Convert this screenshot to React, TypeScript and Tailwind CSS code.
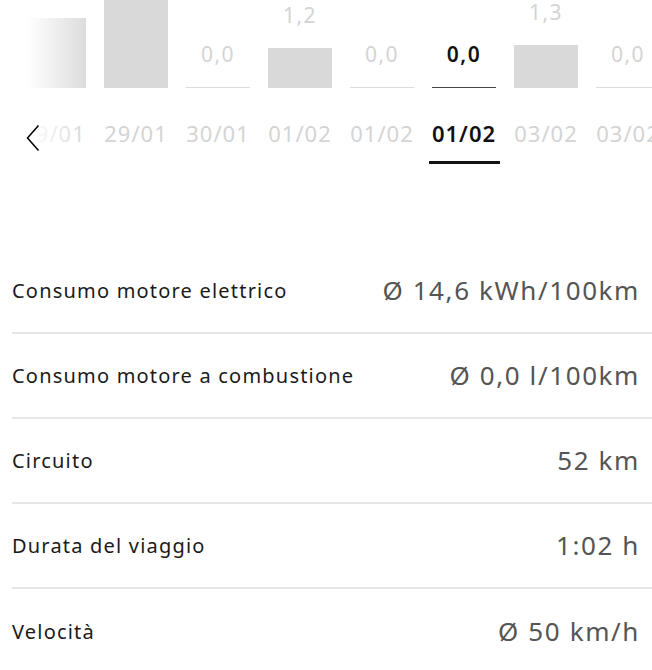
const days = [
  { date: "29/01", value: "", height: 70 },
  { date: "29/01", value: "", height: 110 },
  { date: "30/01", value: "0,0", height: 0 },
  { date: "01/02", value: "1,2", height: 40 },
  { date: "01/02", value: "0,0", height: 0 },
  { date: "01/02", value: "0,0", height: 0, selected: true },
  { date: "03/02", value: "1,3", height: 43 },
  { date: "03/02", value: "0,0", height: 0 },
];

const stats = [
  { label: "Consumo motore elettrico", value: "Ø 14,6 kWh/100km" },
  { label: "Consumo motore a combustione", value: "Ø 0,0 l/100km" },
  { label: "Circuito", value: "52 km" },
  { label: "Durata del viaggio", value: "1:02 h" },
  { label: "Velocità", value: "Ø 50 km/h" },
];

export default function App() {
  return (
    <div className="w-[652px] h-[670px] overflow-hidden bg-white font-['Noto_Sans',sans-serif]">
      <div className="relative overflow-hidden">
        <div className="flex h-[88px] items-end gap-[18px] pl-[22px] overflow-hidden">
          {days.map((d, i) => (
            <div key={i} className="flex w-[64px] shrink-0 flex-col items-center justify-end">
              {d.value && (
                <span
                  className={`mb-[22px] whitespace-nowrap text-[21px] leading-[22px] tracking-[1.5px] ${
                    d.selected ? "font-semibold text-[#111]" : "text-[#d4d4d4]"
                  }`}
                >
                  {d.value}
                </span>
              )}
              {d.height > 0 ? (
                <div className="w-full bg-[#d9d9d9]" style={{ height: d.height }} />
              ) : (
                <div className={`h-[1.5px] w-full ${d.selected ? "bg-[#444]" : "bg-[#dcdcdc]"}`} />
              )}
            </div>
          ))}
        </div>

        <div className="mt-[30px] flex gap-[18px] pl-[22px]">
          {days.map((d, i) => (
            <div key={i} className="flex w-[64px] shrink-0 flex-col items-center">
              <span
                className={`whitespace-nowrap text-[22px] leading-[30px] tracking-[1px] ${
                  d.selected ? "font-semibold text-[#111]" : "text-[#d4d4d4]"
                }`}
              >
                {d.date}
              </span>
              <div className={`mt-[13px] h-[3px] w-[71px] ${d.selected ? "bg-[#111]" : "bg-transparent"}`} />
            </div>
          ))}
        </div>

        <div className="absolute left-0 top-0 h-full w-[92px] bg-gradient-to-r from-white from-30% to-transparent" />
        <svg
          className="absolute left-[26px] top-[124px]"
          width="14"
          height="28"
          viewBox="0 0 14 28"
          fill="none"
          stroke="#000"
          strokeWidth="1.5"
        >
          <polyline points="12.5,1.5 1.5,14 12.5,26.5" />
        </svg>
      </div>

      <div className="mt-[85px] pl-[12px]">
        {stats.map((s, i) => (
          <div
            key={i}
            className={`flex h-[85px] items-center justify-between pr-[12px] ${
              i < stats.length - 1 ? "border-b-2 border-[#e6e6e6]" : ""
            }`}
          >
            <span className="text-[20px] tracking-[1.2px] text-[#1a1a1a]">{s.label}</span>
            <span className="text-[26px] tracking-[1.6px] text-[#555]">{s.value}</span>
          </div>
        ))}
      </div>
    </div>
  );
}
